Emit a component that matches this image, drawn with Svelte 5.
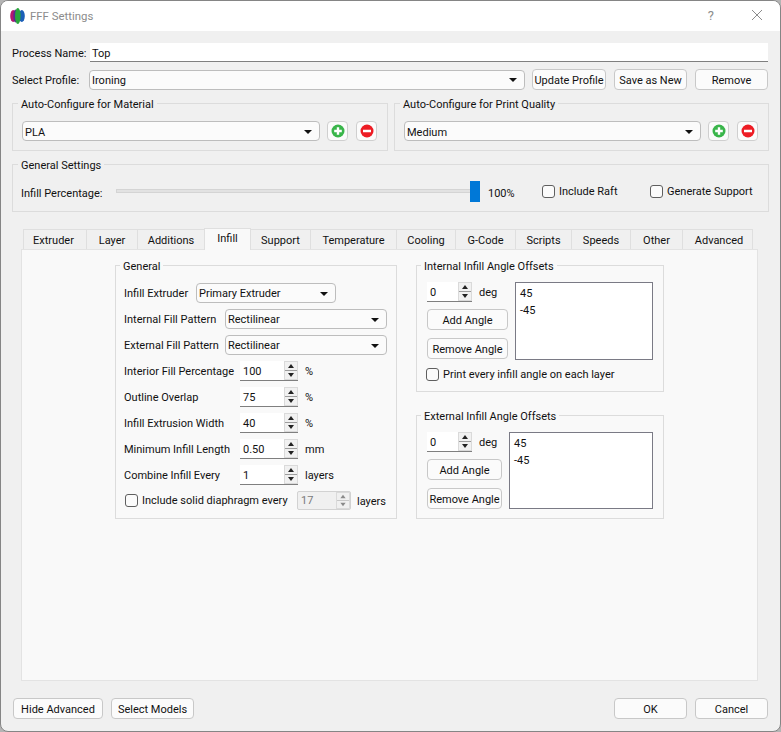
<script>
  const tabs = [
    ['Extruder', 64], ['Layer', 51], ['Additions', 67], ['Infill', 47], ['Support', 60], ['Temperature', 86],
    ['Cooling', 59], ['G-Code', 60], ['Scripts', 56], ['Speeds', 59], ['Other', 52], ['Advanced', 70]
  ];
  const rows = [
    ['Interior Fill Percentage', '100', '%'],
    ['Outline Overlap', '75', '%'],
    ['Infill Extrusion Width', '40', '%'],
    ['Minimum Infill Length', '0.50', 'mm'],
    ['Combine Infill Every', '1', 'layers']
  ];
</script>

{#snippet arrows()}
  <span class="arrows">
    <svg width="12" height="8" viewBox="0 0 12 8"><path d="M6 2 L9 6 H3 Z" /></svg>
    <i class="sep"></i>
    <svg width="12" height="8" viewBox="0 0 12 8"><path d="M6 6 L3 2 H9 Z" /></svg>
  </span>
{/snippet}

{#snippet combo(text, cls)}
  <div class="combo {cls}"><span>{text}</span><i class="tri"></i></div>
{/snippet}

{#snippet roundIcon(kind)}
  <button class="icon-btn" aria-label={kind}>
    <svg width="14" height="14" viewBox="0 0 14 14">
      {#if kind === 'add'}
        <circle cx="7" cy="7" r="6.5" fill="#39b54a" />
        <path d="M7 3.2 V10.8 M3.2 7 H10.8" stroke="#fff" stroke-width="2.4" />
      {:else}
        <circle cx="7" cy="7" r="6.5" fill="#ed1c24" />
        <path d="M3 7 H11" stroke="#fff" stroke-width="2.6" />
      {/if}
    </svg>
  </button>
{/snippet}

<div class="screen">
  <div class="window">
    <header class="titlebar">
      <svg class="logo" width="15" height="16" viewBox="0 0 15 16">
        <ellipse cx="3.2" cy="8" rx="3" ry="6" fill="#b5176f" />
        <ellipse cx="11.8" cy="8" rx="3" ry="6" fill="#1b5fb8" />
        <ellipse cx="5.5" cy="8" rx="2.2" ry="6.5" fill="#5a2a90" />
        <ellipse cx="7.8" cy="8" rx="2.8" ry="8" fill="#2aa63c" />
      </svg>
      <span class="title">FFF Settings</span>
      <span class="help">?</span>
      <svg class="close" width="12" height="12" viewBox="0 0 12 12"><path d="M1 1 L11 11 M11 1 L1 11" stroke="#8c8c8c" stroke-width="1" fill="none" /></svg>
    </header>

    <main class="body">
      <div class="row name-row">
        <label class="lead n" for="pn">Process Name:</label>
        <div id="pn" class="line-input">Top</div>
      </div>
      <div class="row profile-row">
        <span class="lead p">Select Profile:</span>
        {@render combo('Ironing', 'grow')}
        <button class="btn w74">Update Profile</button>
        <button class="btn w73">Save as New</button>
        <button class="btn w73">Remove</button>
      </div>

      <div class="auto-row">
        <section class="group auto first">
          <span class="legend">Auto-Configure for Material</span>
          {@render combo('PLA', 'grow')}
          {@render roundIcon('add')}
          {@render roundIcon('remove')}
        </section>
        <section class="group auto">
          <span class="legend">Auto-Configure for Print Quality</span>
          {@render combo('Medium', 'grow')}
          {@render roundIcon('add')}
          {@render roundIcon('remove')}
        </section>
      </div>

      <section class="group general">
        <span class="legend">General Settings</span>
        <span class="inf-label">Infill Percentage:</span>
        <div class="slider"><div class="groove"></div><div class="handle"></div></div>
        <span class="pct">100%</span>
        <label class="check raft"><i class="box"></i>Include Raft</label>
        <label class="check"><i class="box"></i>Generate Support</label>
      </section>

      <div class="tabs">
        {#each tabs as [name, w]}
          <div class="tab" class:active={name === 'Infill'} style="width:{w}px">{name}</div>
        {/each}
      </div>

      <div class="pane">
        <section class="group form">
          <span class="legend">General</span>
          <div class="frow">
            <span class="flabel l1">Infill Extruder</span>
            {@render combo('Primary Extruder', 'c140')}
          </div>
          <div class="frow">
            <span class="flabel l2">Internal Fill Pattern</span>
            {@render combo('Rectilinear', 'c162')}
          </div>
          <div class="frow">
            <span class="flabel l2">External Fill Pattern</span>
            {@render combo('Rectilinear', 'c162')}
          </div>
          {#each rows as [label, value, unit]}
            <div class="frow">
              <span class="flabel l3">{label}</span>
              <div class="spin s58"><span class="val">{value}</span>{@render arrows()}</div>
              <span class="unit">{unit}</span>
            </div>
          {/each}
          <div class="frow last">
            <label class="check dia"><i class="box"></i>Include solid diaphragm every</label>
            <div class="spin disabled"><span class="val">17</span>{@render arrows()}</div>
            <span class="unit">layers</span>
          </div>
        </section>

        <div class="angles">
          <section class="group ang internal">
            <span class="legend">Internal Infill Angle Offsets</span>
            <div class="ang-top">
              <div class="ang-left w81">
                <div class="deg-row"><div class="spin s45"><span class="val">0</span>{@render arrows()}</div><span class="deg">deg</span></div>
                <button class="btn b21">Add Angle</button>
                <button class="btn b21">Remove Angle</button>
              </div>
              <div class="list"><div>45</div><div>-45</div></div>
            </div>
            <label class="check every"><i class="box"></i>Print every infill angle on each layer</label>
          </section>
          <section class="group ang external">
            <span class="legend">External Infill Angle Offsets</span>
            <div class="ang-top">
              <div class="ang-left w75">
                <div class="deg-row"><div class="spin s45"><span class="val">0</span>{@render arrows()}</div><span class="deg">deg</span></div>
                <button class="btn b21">Add Angle</button>
                <button class="btn b21">Remove Angle</button>
              </div>
              <div class="list"><div>45</div><div>-45</div></div>
            </div>
          </section>
        </div>
      </div>

      <footer class="footer">
        <button class="btn hide">Hide Advanced</button>
        <button class="btn models">Select Models</button>
        <span class="spacer"></span>
        <button class="btn w73">OK</button>
        <button class="btn w73">Cancel</button>
      </footer>
    </main>
  </div>
</div>

<style>
  :global(body) { margin: 0; background: #b9b9b9; }
  * { box-sizing: border-box; }
  .screen {
    width: 781px; height: 732px; overflow: hidden; background: #b4b4b4;
    font-family: Roboto, "Noto Sans", sans-serif; font-size: 11px; color: #111;
  }
  .window {
    width: 781px; height: 732px; border: 1px solid #858585; border-radius: 8px; overflow: hidden;
    background: #f0f0f0; display: flex; flex-direction: column;
  }
  .titlebar { height: 30px; background: #fff; display: flex; align-items: center; padding: 0 17px 0 9px; flex: none; }
  .logo { margin-right: 5px; }
  .title { font-size: 11.4px; color: #8b8b8b; flex: 1; }
  .help { font-size: 13px; color: #8c8c8c; margin: 0 37px 2px 0; }
  .close { margin-bottom: 2px; }
  .body { flex: 1; padding: 12px 12px 0 11px; display: flex; flex-direction: column; min-height: 0; }

  .row { display: flex; align-items: center; }
  .lead { width: 78px; flex: none; padding-top: 1px; }
  .lead.n { padding-top: 3px; }
  .lead.p { width: 77px; }
  .name-row { height: 18px; }
  .line-input { flex: 1; height: 19px; background: #fff; border-bottom: 1px solid #7f7f7f; padding-left: 2px; line-height: 21px; }
  .profile-row { margin-top: 8px; height: 21px; }
  .profile-row .grow { flex: 1; }
  .profile-row .w74 { margin-left: 7px; width: 74px; }
  .profile-row .w73 { margin-left: 8px; width: 73px; }

  .btn {
    height: 21px; padding: 1px 0 0; border: 1px solid #c8c8c8; border-radius: 4px; background: #fbfbfb;
    font: inherit; color: #111; display: flex; align-items: center; justify-content: center; white-space: nowrap;
  }
  .combo {
    height: 20px; border: 1px solid #bdbdbd; border-radius: 4px; background: #fbfbfb;
    display: flex; align-items: center; justify-content: space-between; padding: 1px 7px 0 2px;
  }
  .tri { width: 0; height: 0; border-left: 4px solid transparent; border-right: 4px solid transparent; border-top: 4px solid #111; }
  .icon-btn {
    width: 21px; height: 20px; padding: 0; margin-left: 7px; border: 1px solid #cfcfcf; border-radius: 4px; background: #fbfbfb;
    display: flex; align-items: center; justify-content: center;
  }
  .icon-btn + .icon-btn { margin-left: 8px; }

  .group { position: relative; border: 1px solid #dcdcdc; }
  .legend { position: absolute; top: -7px; left: 5px; padding: 0 3px; background: #f0f0f0; line-height: 16px; white-space: nowrap; }

  .auto-row { display: flex; gap: 6px; margin: 13px -1px 0 0; }
  .auto { flex: 1; height: 48px; display: flex; align-items: center; padding: 8px 10px 0 9px; }
  .auto.first { flex: none; width: 376px; }
  .auto .grow { flex: 1; padding-top: 2px; }
  .general { height: 48px; margin: 13px -1px 0 0; display: flex; align-items: center; padding: 7px 0 0 8px; }
  .inf-label { width: 95px; padding-top: 3px; }
  .slider { position: relative; width: 364px; height: 21px; }
  .groove { position: absolute; left: 0; right: 0; top: 8px; height: 4px; background: #e2e2e2; border: 1px solid #d4d4d4; }
  .handle { position: absolute; right: 0; top: 0; width: 10px; height: 21px; background: #0078d7; }
  .pct { margin-left: 8px; width: 54px; padding-top: 3px; }
  .check { display: flex; align-items: center; white-space: nowrap; }
  .box { width: 13px; height: 13px; border: 1px solid #5f5f5f; border-radius: 3px; background: #fbfbfb; margin-right: 4px; flex: none; }
  .raft { width: 108px; }

  .tabs { display: flex; margin: 16px 0 0 11px; height: 21px; align-items: flex-end; position: relative; z-index: 1; }
  .tab {
    height: 20px; background: #f0f0f0; border: 1px solid #dfdfdf; border-bottom: 0;
    display: flex; align-items: center; justify-content: center; border-left-width: 0; padding-top: 1px;
  }
  .tab:first-child { border-left-width: 1px; padding-right: 3px; }
  .tab:last-child { padding-left: 3px; }
  .tab.active { height: 22px; margin-bottom: -1px; background: #f9f9f9; border-left-width: 1px; margin-left: -1px; padding: 0 0 2px; }

  .pane {
    height: 432px; margin: 0 10px 0 9px; background: #f9f9f9; border: 1px solid #e3e3e3;
    display: flex; align-items: flex-start; padding: 15px 0 0 93px;
  }
  .pane .legend { background: #f9f9f9; left: 4px; }
  .form { width: 282px; height: 254px; padding: 17px 9px 0 8px; display: flex; flex-direction: column; gap: 6px; }
  .frow { display: flex; align-items: center; height: 20px; }
  .flabel { flex: none; white-space: nowrap; }
  .l1 { width: 72px; }
  .l2 { width: 101px; }
  .l3 { width: 116px; }
  .c140 { width: 140px; }
  .c162 { width: 162px; }
  .spin { display: flex; align-items: stretch; height: 20px; background: #fff; border-bottom: 1px solid #7f7f7f; }
  .val { flex: 1; padding-left: 3px; line-height: 21px; }
  .arrows { width: 14px; height: 19px; display: flex; flex-direction: column; justify-content: center; background: #f1f1f1; border: 1px solid #dadada; flex: none; }
  .arrows svg { flex: none; fill: #222; }
  .sep { height: 1px; background: #9d9d9d; flex: none; }
  .s58 { width: 58px; }
  .s45 { width: 45px; }
  .unit { margin-left: 7px; padding-top: 1px; }
  .dia { width: 172px; margin: -2px 0 0 1px; }
  .disabled { width: 54px; height: 19px; margin-top: -2px; background: #f0f0f0; border: 1px solid #d2d2d2; border-radius: 2px; color: #7a7a7a; }
  .disabled .val { line-height: 18px; }
  .disabled .arrows { background: #f0f0f0; height: 17px; }
  .disabled .arrows svg { fill: #8a8a8a; height: 7px; }
  .disabled .sep { background: #c8c8c8; }
  .disabled + .unit { margin-left: 6px; }

  .angles { margin-left: 19px; width: 248px; display: flex; flex-direction: column; gap: 23px; }
  .ang { padding: 16px 10px 0 10px; }
  .internal { height: 127px; }
  .external { height: 104px; }
  .ang-top { display: flex; align-items: flex-start; justify-content: space-between; }
  .ang-left { display: flex; flex-direction: column; gap: 8px; flex: none; }
  .w81 { width: 81px; }
  .w75 { width: 75px; }
  .deg-row { display: flex; align-items: center; height: 20px; margin-bottom: -1px; white-space: nowrap; }
  .deg { margin-left: 7px; padding-top: 1px; }
  .list { background: #fff; border: 1px solid #7a7a85; padding: 2px 4px 0; line-height: 17px; flex: 1; margin-left: 7px; }
  .internal .list { height: 78px; }
  .external .list { height: 77px; }
  .every { margin-top: 8px; margin-left: -1px; }

  .footer { display: flex; align-items: center; gap: 8px; margin-top: 17px; padding-left: 1px; }
  .spacer { flex: 1; }
  .hide { width: 90px; }
  .models { width: 83px; }
  .w73 { width: 73px; }
</style>
